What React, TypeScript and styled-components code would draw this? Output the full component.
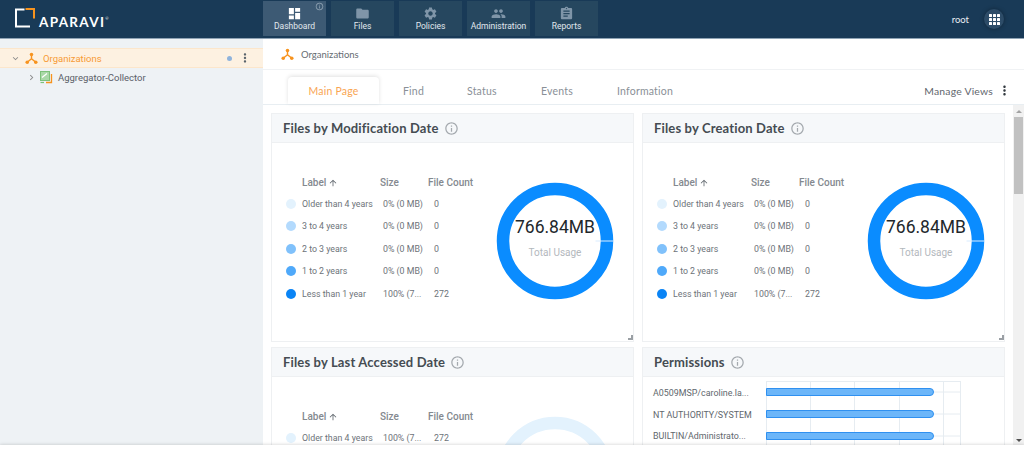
import React from "react";
import styled, { createGlobalStyle } from "styled-components";
import { MdDashboard, MdFolder, MdSettings, MdPeople, MdAssignment, MdKeyboardArrowDown, MdKeyboardArrowRight, MdInfoOutline, MdMoreVert, MdArrowUpward } from "react-icons/md";

const GlobalStyle = createGlobalStyle`
  html, body { margin: 0; padding: 0; height: 452px; overflow: hidden; background: #fff; }
  body { font-family: "Roboto", "Liberation Sans", sans-serif; }
  * { box-sizing: border-box; }
`;

const Page = styled.div`
  width: 1024px;
  height: 452px;
  display: flex;
  flex-direction: column;
  overflow: hidden;
`;

const Header = styled.header`
  height: 39px;
  flex: none;
  background: #193a57;
  border-bottom: 1px solid #8fa3b5;
  display: flex;
  align-items: flex-start;
`;

const Logo = styled.div`
  width: 263px;
  height: 38px;
  padding: 8px 0 0 15px;
  display: flex;
  align-items: flex-start;
  color: #fff;
`;

const LogoText = styled.span`
  font-family: "Lato", sans-serif;
  font-size: 13.5px;
  font-weight: 700;
  letter-spacing: 1.3px;
  line-height: 12px;
  margin: 8px 0 0 4px;
  sup { font-size: 4px; font-weight: 400; vertical-align: top; line-height: 6px; letter-spacing: 0; }
`;

const NavBar = styled.nav`
  display: flex;
  gap: 5px;
  padding-top: 1px;
`;

const NavButton = styled.div<{ $active?: boolean }>`
  position: relative;
  width: 63px;
  height: 35px;
  background: ${(p) => (p.$active ? "#3d5a74" : "#26475f")};
  display: flex;
  flex-direction: column;
  align-items: center;
  padding-top: 5px;
  span {
    font-size: 8.5px;
    line-height: 11px;
    color: #e2e8ee;
    white-space: nowrap;
  }
`;

const NavInfo = styled(MdInfoOutline)`
  position: absolute;
  top: 1px;
  right: 2px;
  color: #93a6b6;
`;

const UserArea = styled.div`
  margin-left: auto;
  height: 38px;
  display: flex;
  align-items: center;
  padding-right: 20px;
  gap: 15px;
  color: #e8edf2;
  font-family: "Lato", sans-serif;
  font-size: 9.5px;
`;

const AppsButton = styled.div`
  width: 20px;
  height: 20px;
  border-radius: 50%;
  background: #2d4c68;
  box-shadow: 0 0 4px rgba(0, 0, 0, 0.35);
  display: grid;
  place-items: center;
`;

const Body = styled.div`
  flex: 1;
  min-height: 0;
  display: flex;
`;

const Sidebar = styled.aside`
  width: 263px;
  flex: none;
  background: #eef2f5;
  padding-top: 9px;
`;

const OrgRow = styled.div`
  height: 20px;
  background: #fdf1e1;
  border-top: 1px solid #fce6cb;
  border-bottom: 1px solid #fce6cb;
  display: flex;
  align-items: center;
  gap: 4px;
  padding-left: 10px;
  color: #f79a35;
  font-size: 9.5px;
`;

const OrgName = styled.span`
  margin-left: 1px;
`;

const Dot = styled.i`
  width: 5px;
  height: 5px;
  border-radius: 50%;
  background: #8fb3dc;
  margin-left: auto;
`;

const RowMenu = styled(MdMoreVert)`
  margin: 0 11px 0 2px;
  color: #59636b;
`;

const TreeRow = styled.div`
  height: 18px;
  display: flex;
  align-items: center;
  padding-left: 26px;
  color: #5a6068;
  font-size: 9.5px;
`;

const Main = styled.main`
  flex: 1;
  min-width: 0;
  display: flex;
  flex-direction: column;
`;

const Crumb = styled.div`
  height: 31px;
  flex: none;
  border-bottom: 1px solid #f0f2f4;
  display: flex;
  align-items: center;
  gap: 7px;
  padding-left: 18px;
  color: #666c72;
  font-family: "Lato", sans-serif;
  font-size: 9.5px;
`;

const TabBar = styled.div`
  height: 35px;
  flex: none;
  border-bottom: 1px solid #e8eef2;
  display: flex;
  align-items: flex-end;
  padding-left: 25px;
  font-family: "Lato", sans-serif;
`;

const Tab = styled.div<{ $active?: boolean; $width: number }>`
  width: ${(p) => p.$width}px;
  height: 27px;
  margin-right: ${(p) => (p.$active ? 24 : 0)}px;
  display: flex;
  align-items: center;
  justify-content: ${(p) => (p.$active ? "center" : "flex-start")};
  font-size: 10.5px;
  letter-spacing: 0.2px;
  color: ${(p) => (p.$active ? "#f9a552" : "#8a9097")};
  background: ${(p) => (p.$active ? "#fff" : "transparent")};
  border-radius: 4px 4px 0 0;
  box-shadow: ${(p) => (p.$active ? "0 -1px 4px rgba(0, 0, 0, 0.12)" : "none")};
`;

const ManageViews = styled.div`
  margin-left: auto;
  height: 27px;
  display: flex;
  align-items: center;
  padding-right: 12px;
  gap: 4px;
  color: #5f666d;
  font-size: 10.4px;
  letter-spacing: 0.2px;
  svg { color: #333a40; }
`;

const Content = styled.div`
  flex: 1;
  min-height: 0;
  display: flex;
`;

const Scroller = styled.div`
  flex: 1;
  min-width: 0;
  overflow: hidden;
  padding: 8px 8px 0 8px;
  display: grid;
  grid-template-columns: 363px 363px;
  grid-auto-rows: 229px;
  gap: 5px 8px;
`;

const Card = styled.section`
  position: relative;
  border: 1px solid #eef0f2;
  background: #fff;
  display: flex;
  flex-direction: column;
`;

const CardHeader = styled.div`
  height: 29px;
  flex: none;
  background: #f6f8fa;
  border-bottom: 1px solid #eef0f2;
  display: flex;
  align-items: center;
  gap: 5px;
  padding-left: 11px;
  font-family: "Lato", sans-serif;
  font-size: 13px;
  font-weight: 700;
  letter-spacing: 0.15px;
  color: #454c52;
  svg { color: #a4a9ae; }
`;

const CardBody = styled.div`
  flex: 1;
  min-height: 0;
  display: flex;
  align-items: center;
  padding: 0 0 6px 14px;
`;

const LegendTable = styled.div`
  width: 196px;
  flex: none;
  display: grid;
  grid-template-columns: 16px 78px 48px 54px;
  grid-template-rows: 19px repeat(5, 22.5px);
  align-items: center;
  font-size: 8.8px;
  color: #6d7379;
`;

const HeadCell = styled.div`
  font-size: 10px;
  font-weight: 500;
  color: #84898f;
  display: flex;
  align-items: center;
  white-space: nowrap;
  gap: 2px;
  svg { color: #5f666d; }
`;

const Swatch = styled.i<{ $color: string }>`
  width: 10px;
  height: 10px;
  border-radius: 50%;
  background: ${(p) => p.$color};
`;

const Cell = styled.div<{ $inset?: number }>`
  padding-left: ${(p) => p.$inset ?? 0}px;
  white-space: nowrap;
`;

const DonutWrap = styled.div`
  position: relative;
  width: 118px;
  height: 118px;
  margin: 3px 0 0 14px;
  flex: none;
`;

const DonutLabel = styled.div`
  position: absolute;
  inset: 0;
  display: flex;
  flex-direction: column;
  align-items: center;
  padding-top: 35px;
  strong {
    font-weight: 400;
    font-size: 17.5px;
    line-height: 20px;
    color: #22272b;
  }
  span {
    font-size: 10px;
    margin-top: 10px;
    color: #b3b8bd;
  }
`;

const Grip = styled.i`
  position: absolute;
  right: 0;
  bottom: 1px;
  width: 5px;
  height: 5px;
  border-right: 2px solid #9a9fa4;
  border-bottom: 2px solid #9a9fa4;
`;

const PermissionBody = styled.div`
  display: flex;
  padding: 4px 0 0 10px;
`;

const PermissionLabels = styled.div`
  width: 113px;
  flex: none;
  padding-top: 5px;
  font-size: 8.9px;
  color: #61676d;
  div { height: 21.7px; line-height: 14px; white-space: nowrap; }
`;

const Scrollbar = styled.div`
  width: 11px;
  flex: none;
  margin-left: auto;
  background: #f1f1f1;
  display: flex;
  flex-direction: column;
  align-items: center;
  justify-content: space-between;
  padding: 5px 0 3px;
`;

const Thumb = styled.div`
  width: 9px;
  height: 77px;
  background: #c1c1c1;
  margin: 4px 0 auto;
`;

const Arrow = styled.i<{ $down?: boolean }>`
  width: 0;
  height: 0;
  border-left: 3px solid transparent;
  border-right: 3px solid transparent;
  ${(p) => (p.$down ? "border-top: 3px solid #505050;" : "border-bottom: 3px solid #a3a3a3;")}
`;

const Footer = styled.div`
  height: 7px;
  flex: none;
  background: #fff;
  box-shadow: 0 -1px 3px rgba(0, 0, 0, 0.12);
  position: relative;
`;

const OrgIcon = () => (
  <svg width="13" height="13" viewBox="0 0 14 14" fill="none">
    <path d="M7 3.5V7.2M7 7.2L3 10.6M7 7.2L11 10.6" stroke="#f7931e" strokeWidth="1.5" />
    <circle cx="7" cy="2.6" r="1.9" fill="#f7931e" />
    <circle cx="2.4" cy="11" r="1.9" fill="#f7931e" />
    <circle cx="11.6" cy="11" r="1.9" fill="#f7931e" />
  </svg>
);

const CollectorIcon = () => (
  <svg width="13" height="13" viewBox="0 0 13 13" fill="none" style={{ margin: "0 5px 0 3px" }}>
    <rect x="0.5" y="0.5" width="9" height="9" fill="#a9d8a8" stroke="#7cc17a" />
    <path d="M2 6.5l5-4" stroke="#fff" strokeWidth="1.2" />
    <path d="M6 11.5h5.5V3" stroke="#f7931e" strokeWidth="1.3" />
    <path d="M0.5 11.5h3.5" stroke="#7cc17a" strokeWidth="1.2" />
  </svg>
);

const LogoMark = () => (
  <svg width="20" height="20" viewBox="0 0 20 20" fill="none">
    <path d="M9.5 1.5H1V18.5H15" stroke="#fff" strokeWidth="2" />
    <path d="M10.5 1H19V10.5" stroke="#f7931e" strokeWidth="2" />
  </svg>
);

const AppsIcon = () => (
  <svg width="11" height="11" viewBox="0 0 11 11" fill="#fff">
    {[0, 4, 8].flatMap((y) =>
      [0, 4, 8].map((x) => <rect key={`${x}-${y}`} x={x} y={y} width="3" height="3" rx="0.5" />)
    )}
  </svg>
);

const Donut = ({ color }: { color: string }) => (
  <svg width="118" height="118" viewBox="0 0 118 118">
    <circle cx="59" cy="59" r="52" fill="none" stroke={color} strokeWidth="12.5" />
    <path d="M99.5 59H118" stroke="#d9ecff" strokeWidth="1" />
  </svg>
);

const navItems = [
  { label: "Dashboard", icon: MdDashboard, active: true },
  { label: "Files", icon: MdFolder },
  { label: "Policies", icon: MdSettings },
  { label: "Administration", icon: MdPeople },
  { label: "Reports", icon: MdAssignment },
];

const bands = [
  { label: "Older than 4 years", color: "#e3f2fd" },
  { label: "3 to 4 years", color: "#b3dafd" },
  { label: "2 to 3 years", color: "#80c1fb" },
  { label: "1 to 2 years", color: "#4fa9fa" },
  { label: "Less than 1 year", color: "#0a84f5" },
];

const Legend = ({ newest }: { newest?: boolean }) => (
  <LegendTable>
    <span />
    <HeadCell>Label <MdArrowUpward size={10} /></HeadCell>
    <HeadCell>Size</HeadCell>
    <HeadCell>File Count</HeadCell>
    {bands.map((b, i) => {
      const full = newest ? i === bands.length - 1 : i === 0;
      return (
        <React.Fragment key={b.label}>
          <Swatch $color={b.color} />
          <Cell>{b.label}</Cell>
          <Cell $inset={3}>{full ? "100% (7..." : "0% (0 MB)"}</Cell>
          <Cell $inset={6}>{full ? "272" : "0"}</Cell>
        </React.Fragment>
      );
    })}
  </LegendTable>
);

const DateCard = ({ title, newest = true, color = "#0a8cff" }: { title: string; newest?: boolean; color?: string }) => (
  <Card>
    <CardHeader>
      {title} <MdInfoOutline size={15} />
    </CardHeader>
    <CardBody>
      <Legend newest={newest} />
      <DonutWrap>
        <Donut color={color} />
        <DonutLabel>
          <strong>766.84MB</strong>
          <span>Total Usage</span>
        </DonutLabel>
      </DonutWrap>
    </CardBody>
    <Grip />
  </Card>
);

const PermissionChart = () => (
  <svg width="196" height="70" viewBox="0 0 196 70" fill="none">
    {[0.5, 44.5, 88.5, 133.5, 177.5, 194.5].map((x) => (
      <path key={x} d={`M${x} 0V70`} stroke="#e6ecf1" />
    ))}
    <path d="M0 0.5H195" stroke="#e6ecf1" />
    {[11, 33, 55].map((y) => (
      <g key={y}>
        <path d={`M0 ${y}H195`} stroke="#e6ecf1" />
        <path d={`M0.5 ${y - 3.5}H164a3.5 3.5 0 0 1 0 7H0.5Z`} fill="#6cb6f9" stroke="#2f90f0" />
      </g>
    ))}
  </svg>
);

export default function App() {
  return (
    <Page>
      <GlobalStyle />
      <Header>
        <Logo>
          <LogoMark />
          <LogoText>
            APARAVI<sup>®</sup>
          </LogoText>
        </Logo>
        <NavBar>
          {navItems.map(({ label, icon: Icon, active }) => (
            <NavButton key={label} $active={active}>
              {active && <NavInfo size={9} />}
              <Icon size={15} color={active ? "#fff" : "#7f95a8"} />
              <span>{label}</span>
            </NavButton>
          ))}
        </NavBar>
        <UserArea>
          root
          <AppsButton>
            <AppsIcon />
          </AppsButton>
        </UserArea>
      </Header>
      <Body>
        <Sidebar>
          <OrgRow>
            <MdKeyboardArrowDown size={11} color="#8c8c8c" />
            <OrgIcon />
            <OrgName>Organizations</OrgName>
            <Dot />
            <RowMenu size={14} />
          </OrgRow>
          <TreeRow>
            <MdKeyboardArrowRight size={11} color="#8c8c8c" />
            <CollectorIcon />
            Aggregator-Collector
          </TreeRow>
        </Sidebar>
        <Main>
          <Crumb>
            <OrgIcon />
            Organizations
          </Crumb>
          <TabBar>
            <Tab $active $width={91}>Main Page</Tab>
            <Tab $width={64}>Find</Tab>
            <Tab $width={74}>Status</Tab>
            <Tab $width={76}>Events</Tab>
            <Tab $width={90}>Information</Tab>
            <ManageViews>
              Manage Views
              <MdMoreVert size={15} />
            </ManageViews>
          </TabBar>
          <Content>
            <Scroller>
              <DateCard title="Files by Modification Date" />
              <DateCard title="Files by Creation Date" />
              <DateCard title="Files by Last Accessed Date" newest={false} color="#e3f2fd" />
              <Card>
                <CardHeader>
                  Permissions <MdInfoOutline size={15} />
                </CardHeader>
                <PermissionBody>
                  <PermissionLabels>
                    <div>A0509MSP/caroline.la...</div>
                    <div>NT AUTHORITY/SYSTEM</div>
                    <div>BUILTIN/Administrato...</div>
                  </PermissionLabels>
                  <PermissionChart />
                </PermissionBody>
              </Card>
            </Scroller>
            <Scrollbar>
              <Arrow />
              <Thumb />
              <Arrow $down />
            </Scrollbar>
          </Content>
        </Main>
      </Body>
      <Footer />
    </Page>
  );
}
